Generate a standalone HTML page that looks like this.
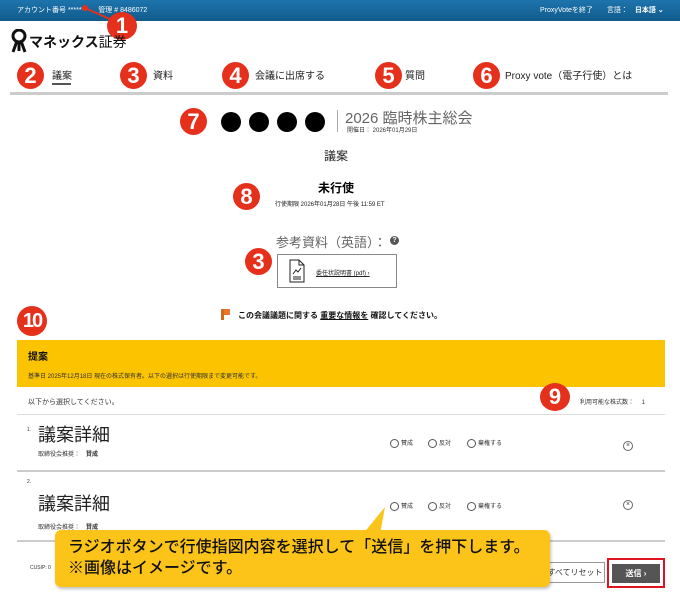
<!DOCTYPE html>
<html><head><meta charset="utf-8"><style>
*{margin:0;padding:0;box-sizing:border-box}
body{width:680px;height:601px;position:relative;overflow:hidden;background:#fff;font-family:"Liberation Sans","Noto Sans CJK JP",sans-serif;color:#222}
.a{position:absolute;white-space:nowrap}
.b{position:absolute;width:27px;height:27px;border-radius:50%;background:#e5301b;color:#fff;font-weight:bold;font-size:22px;line-height:27px;text-align:center;font-family:"Liberation Sans",sans-serif}
.r{position:absolute;width:9px;height:9px;border:1px solid #555;border-radius:50%}
.s{font-size:7px;color:#333}
.d{position:absolute;top:112px;width:20px;height:20px;border-radius:50%;background:#000}
</style></head><body>
<div class="a" style="left:0;top:0;width:680px;height:21px;background:linear-gradient(#1d74ad,#125b8c)"></div>
<div class="a" style="left:17px;top:5px;font-size:7px;color:#fff">アカウント番号 ******　　管理 # 8486072</div>
<div class="a" style="left:540px;top:5px;font-size:7px;color:#fff">ProxyVoteを終了　　言語：　<b>日本語 ⌄</b></div>
<svg class="a" style="left:80px;top:5px" width="40" height="20"><line x1="5" y1="3" x2="32" y2="15" stroke="#e5301b" stroke-width="2"/><circle cx="5" cy="3" r="3" fill="#e5301b"/></svg>
<div class="b" style="left:107px;top:12px;width:30px;height:28px;line-height:28px">1</div>
<svg class="a" style="left:10px;top:29px" width="18" height="24"><circle cx="9" cy="7" r="6" fill="none" stroke="#111" stroke-width="3"/><path d="M3 23 L7 12 M15 23 L11 12 M9 12 V22" stroke="#111" stroke-width="3"/></svg>
<div class="a" style="left:29px;top:32px;font-size:14px;font-weight:bold;color:#111">マネックス<span style="font-weight:normal">証券</span></div>
<div class="b" style="left:17px;top:62px">2</div><div class="a" style="left:52px;top:67px;font-size:10px">議案</div>
<div class="a" style="left:52px;top:83px;width:19px;height:2px;background:#555"></div>
<div class="b" style="left:120px;top:62px">3</div><div class="a" style="left:153px;top:67px;font-size:10px">資料</div>
<div class="b" style="left:222px;top:62px">4</div><div class="a" style="left:255px;top:67px;font-size:10px">会議に出席する</div>
<div class="b" style="left:375px;top:62px">5</div><div class="a" style="left:405px;top:67px;font-size:10px">質問</div>
<div class="b" style="left:473px;top:62px">6</div><div class="a" style="left:505px;top:67px;font-size:10px">Proxy vote（電子行使）とは</div>
<div class="a" style="left:10px;top:92px;width:658px;height:3px;background:#ccc"></div>
<div class="b" style="left:180px;top:108px">7</div>
<div class="d" style="left:221px"></div><div class="d" style="left:249px"></div><div class="d" style="left:277px"></div><div class="d" style="left:305px"></div>
<div class="a" style="left:337px;top:110px;width:1px;height:22px;background:#aaa"></div>
<div class="a" style="left:345px;top:107px;font-size:15px;color:#666">2026 臨時株主総会</div>
<div class="a" style="left:347px;top:125px;font-size:6px;color:#333">開催日： 2026年01月29日</div>
<div class="a" style="left:324px;top:147px;font-size:12px">議案</div>
<div class="b" style="left:233px;top:183px">8</div>
<div class="a" style="left:318px;top:179px;font-size:12px;font-weight:bold;color:#000">未行使</div>
<div class="a" style="left:275px;top:199px;font-size:6px">行使期限 2026年01月28日 午後 11:59 ET</div>
<div class="a" style="left:276px;top:232px;font-size:13px;color:#666">参考資料（英語）：</div>
<div class="a" style="left:390px;top:236px;width:9px;height:9px;border-radius:50%;background:#555;color:#fff;font-size:7px;line-height:9px;text-align:center;font-weight:bold">?</div>
<div class="b" style="left:245px;top:248px">3</div>
<div class="a" style="left:277px;top:254px;width:120px;height:34px;border:1px solid #888"></div>
<svg class="a" style="left:289px;top:259px" width="16" height="24"><path d="M1 1H10L15 6V23H1Z M10 1V6H15" fill="none" stroke="#222"/><path d="M4 15L7 11L9 13L12 9 M4 18H12 M4 20H12" stroke="#222" fill="none"/></svg>
<div class="a" style="left:316px;top:268px;font-size:6px;text-decoration:underline">委任状説明書 (pdf) <span style="text-decoration:none">›</span></div>
<div class="a" style="left:221px;top:309px;width:3px;height:11px;background:#d0691e"></div><div class="a" style="left:224px;top:309px;width:6px;height:6px;background:#e8762a"></div>
<div class="a" style="left:238px;top:310px;font-size:8px;font-weight:bold;color:#111">この会議議題に関する <u>重要な情報を</u> 確認してください。</div>
<div class="a" style="left:17px;top:340px;width:648px;height:47px;background:#fcc400"></div>
<div class="b" style="left:17px;top:306px;width:30px;height:30px;line-height:30px;font-size:20px;letter-spacing:-2px">10</div>
<div class="a" style="left:28px;top:348px;font-size:10px;font-weight:bold;color:#111">提案</div>
<div class="a s" style="left:28px;top:371px;font-size:6px">基準日 2025年12月18日 現在の株式保有者。以下の選択は行使期限まで変更可能です。</div>
<div class="a s" style="left:28px;top:397px">以下から選択してください。</div>
<div class="b" style="left:540px;top:383px;width:30px;height:28px;line-height:28px">9</div>
<div class="a s" style="left:580px;top:397px;font-size:6px">利用可能な株式数： 　1</div>
<div class="a" style="left:17px;top:414px;width:648px;height:1px;background:#ddd"></div>
<div class="a s" style="left:27px;top:427px;font-size:5px">1.</div>
<div class="a" style="left:38px;top:421px;font-size:18px;color:#222">議案詳細</div>
<div class="a s" style="left:38px;top:449px;font-size:6px">取締役会推奨：　<b>賛成</b></div>
<div class="a" style="left:17px;top:470px;width:648px;height:2px;background:#ccc"></div>
<div class="a s" style="left:27px;top:479px;font-size:5px">2.</div>
<div class="a" style="left:38px;top:490px;font-size:18px;color:#222">議案詳細</div>
<div class="a s" style="left:38px;top:522px;font-size:6px">取締役会推奨：　<b>賛成</b></div>
<div class="a" style="left:17px;top:540px;width:648px;height:2px;background:#ccc"></div>
<div class="r" style="left:390px;top:439px"></div><div class="a s" style="left:401px;top:438px;font-size:6px">賛成</div>
<div class="r" style="left:428px;top:439px"></div><div class="a s" style="left:439px;top:438px;font-size:6px">反対</div>
<div class="r" style="left:467px;top:439px"></div><div class="a s" style="left:478px;top:438px;font-size:6px">棄権する</div>
<div class="r" style="left:390px;top:502px"></div><div class="a s" style="left:401px;top:501px;font-size:6px">賛成</div>
<div class="r" style="left:428px;top:502px"></div><div class="a s" style="left:439px;top:501px;font-size:6px">反対</div>
<div class="r" style="left:467px;top:502px"></div><div class="a s" style="left:478px;top:501px;font-size:6px">棄権する</div>
<div class="a" style="left:623px;top:441px;width:10px;height:10px;border:1px solid #666;border-radius:50%;font-size:7px;line-height:8px;text-align:center;color:#444">×</div>
<div class="a" style="left:623px;top:500px;width:10px;height:10px;border:1px solid #666;border-radius:50%;font-size:7px;line-height:8px;text-align:center;color:#444">×</div>
<div class="a s" style="left:30px;top:565px;font-size:5px">CUSIP: 0</div>
<div class="a" style="left:545px;top:562px;width:60px;height:21px;border:1px solid #999;font-size:8px;line-height:19px;text-align:center;color:#333">すべてリセット</div>
<div class="a" style="left:607px;top:558px;width:58px;height:30px;border:2px solid #e0141e"></div>
<div class="a" style="left:612px;top:564px;width:48px;height:19px;background:#555;color:#fff;font-size:8px;line-height:19px;text-align:center;font-weight:bold">送信 ›</div>
<svg class="a" style="left:360px;top:505px" width="30" height="30"><path d="M3 29 L25 2 L20 29Z" fill="#fcc419"/></svg>
<div class="a" style="left:55px;top:530px;width:495px;height:57px;background:#fcc419;border-radius:6px;box-shadow:1px 2px 3px rgba(0,0,0,.25)"></div>
<div class="a" style="left:68px;top:537px;font-size:16px;line-height:21px;color:#111;font-weight:500">ラジオボタンで行使指図内容を選択して「送信」を押下します。<br>※画像はイメージです。</div>
</body></html>
